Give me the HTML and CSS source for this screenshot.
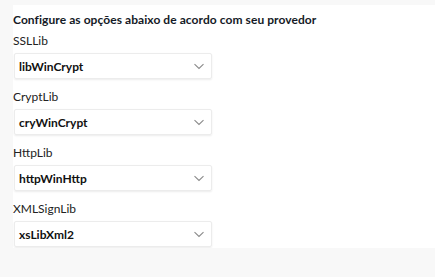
FILE: index.html
```html
<!DOCTYPE html>
<html lang="pt">
<head>
<meta charset="utf-8">
<link rel="stylesheet" href="styles.css">
</head>
<body>
<div class="panel">
  <div class="title">Configure as opções abaixo de acordo com seu provedor</div>
  <div class="field">
    <div class="label">SSLLib</div>
    <div class="select"><span>libWinCrypt</span><svg class="chev" width="12" height="7" viewBox="0 0 12 7"><path d="M1.5 1.2l4.5 4.3 4.5-4.3" fill="none" stroke="#8a8a8a" stroke-width="1.1"/></svg></div>
  </div>
  <div class="field">
    <div class="label">CryptLib</div>
    <div class="select"><span>cryWinCrypt</span><svg class="chev" width="12" height="7" viewBox="0 0 12 7"><path d="M1.5 1.2l4.5 4.3 4.5-4.3" fill="none" stroke="#8a8a8a" stroke-width="1.1"/></svg></div>
  </div>
  <div class="field">
    <div class="label">HttpLib</div>
    <div class="select"><span>httpWinHttp</span><svg class="chev" width="12" height="7" viewBox="0 0 12 7"><path d="M1.5 1.2l4.5 4.3 4.5-4.3" fill="none" stroke="#8a8a8a" stroke-width="1.1"/></svg></div>
  </div>
  <div class="field">
    <div class="label">XMLSignLib</div>
    <div class="select"><span>xsLibXml2</span><svg class="chev" width="12" height="7" viewBox="0 0 12 7"><path d="M1.5 1.2l4.5 4.3 4.5-4.3" fill="none" stroke="#8a8a8a" stroke-width="1.1"/></svg></div>
  </div>
</div>
</body>
</html>
```

FILE: styles.css
```css
html, body {
  margin: 0;
  padding: 0;
  background: #f8f8f8;
}
body {
  padding: 5px 0 0 13px;
  font-family: "Lato", "Open Sans", sans-serif;
  color: #1f1f1f;
  font-size: 12px;
}
.panel {
  background: #fff;
  height: 243px;
  box-sizing: border-box;
  padding-top: 8px;
}
.title {
  font-weight: 700;
  font-size: 12px;
  line-height: 14px;
  letter-spacing: 0.07px;
  color: #141a26;
  margin-bottom: 7px;
}
.field {
  width: 199px;
  margin-bottom: 11px;
}
.label {
  line-height: 14px;
  margin-bottom: 5px;
  color: #222;
}
.select {
  height: 26px;
  box-sizing: border-box;
  margin-left: 1px;
  border: 1px solid #ececec;
  border-radius: 2px;
  box-shadow: 0 1px 2px rgba(0,0,0,0.08);
  display: flex;
  align-items: center;
  justify-content: space-between;
  padding: 0 6px 0 4px;
  font-weight: 700;
  color: #111;
}
.chev {
  display: block;
}
```
